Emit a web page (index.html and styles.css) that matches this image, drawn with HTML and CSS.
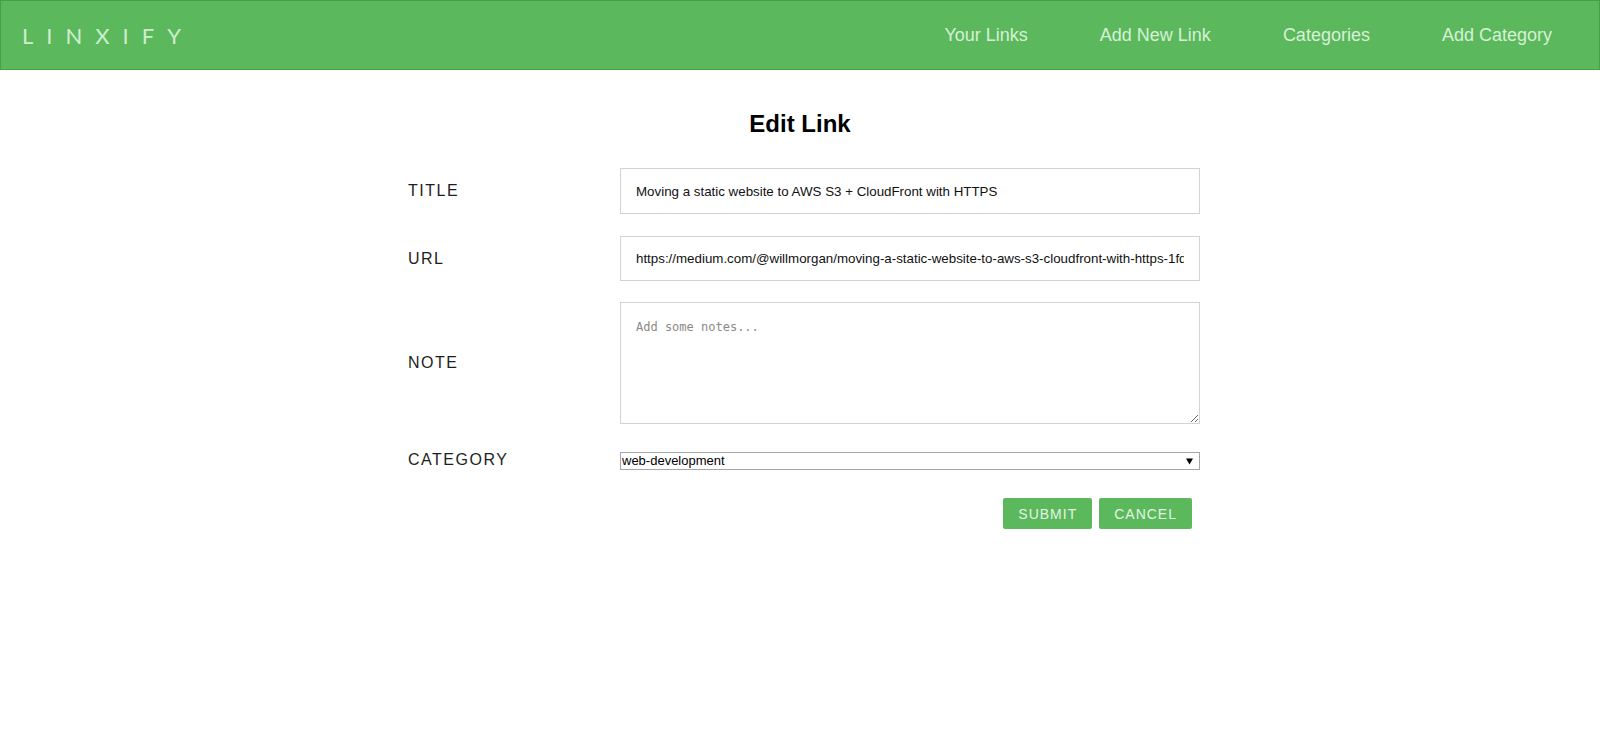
FILE: index.html
```html
<!DOCTYPE html>
<html lang="en">
<head>
<meta charset="utf-8">
<title>Linxify - Edit Link</title>
<link rel="stylesheet" href="styles.css">
</head>
<body>
<header class="navbar">
  <div class="logo">LINXIFY</div>
  <nav class="nav">
    <a class="nav-link" href="#">Your Links</a>
    <a class="nav-link" href="#">Add New Link</a>
    <a class="nav-link" href="#">Categories</a>
    <a class="nav-link" href="#">Add Category</a>
  </nav>
</header>
<main class="main">
  <h1 class="title">Edit Link</h1>
  <form class="form">
    <div class="row row-title">
      <label class="label" for="title">TITLE</label>
      <input class="input" id="title" type="text" value="Moving a static website to AWS S3 + CloudFront with HTTPS">
    </div>
    <div class="row row-url">
      <label class="label" for="url">URL</label>
      <input class="input" id="url" type="text" value="https://medium.com/@willmorgan/moving-a-static-website-to-aws-s3-cloudfront-with-https-1fdd95563106">
    </div>
    <div class="row row-note">
      <label class="label" for="note">NOTE</label>
      <textarea class="textarea" id="note" placeholder="Add some notes..."></textarea>
    </div>
    <div class="row row-cat">
      <label class="label" for="cat">CATEGORY</label>
      <select class="select" id="cat">
        <option>web-development</option>
      </select>
    </div>
    <div class="actions">
      <button class="btn" type="button">Submit</button>
      <button class="btn" type="button">Cancel</button>
    </div>
  </form>
</main>
</body>
</html>
```
FILE: styles.css
```css
* { box-sizing: border-box; }
html, body {
  margin: 0;
  padding: 0;
  background: #fff;
  font-family: "Liberation Sans", Arial, sans-serif;
}
.navbar {
  height: 70px;
  background: #5cb85c;
  border: 1px solid #45a145;
  display: flex;
  align-items: center;
  justify-content: space-between;
  padding: 0 11px 0 21px;
}
.logo {
  font-family: Lato, "Liberation Sans", sans-serif;
  font-weight: 400;
  font-size: 22px;
  letter-spacing: 13px;
  color: #cdeecd;
  padding-top: 1px;
}
.nav {
  display: flex;
  align-items: center;
}
.nav-link {
  color: #d6f1d6;
  text-decoration: none;
  font-size: 18px;
  padding: 0 36px;
}
.main {
  width: 800px;
  margin: 0 auto;
}
.title {
  margin: 40px 0 30px;
  text-align: center;
  font-size: 24px;
  line-height: 28px;
  font-weight: bold;
  color: #000;
}
.form {
  display: flex;
  flex-direction: column;
}
.row {
  display: flex;
  align-items: center;
}
.label {
  width: 220px;
  padding-left: 8px;
  font-size: 16px;
  letter-spacing: 1.5px;
  color: #1e1e1e;
}
.input {
  width: 580px;
  height: 46px;
  border: 1px solid #d3d3d3;
  padding: 0 15px;
  font-family: "Liberation Sans", Arial, sans-serif;
  font-size: 13.33px;
  color: #111;
  background: #fff;
  outline: none;
}
.row-title { margin-bottom: 22px; }
.row-url { margin-bottom: 21px; }
.row-url .input { height: 45px; }
.row-note { margin-bottom: 28px; }
.textarea {
  width: 580px;
  height: 122px;
  border: 1px solid #d3d3d3;
  padding: 17px 15px 15px;
  font-family: "DejaVu Sans Mono", "Liberation Mono", monospace;
  font-size: 12px;
  color: #111;
  resize: vertical;
  outline: none;
}
.textarea::placeholder { color: #8a8a8a; }
.row-cat { margin-bottom: 28px; }
.row-cat .label { margin-top: -2px; }
.select {
  width: 580px;
  height: 18px;
  border: 1px solid #a6a6a6;
  border-radius: 0;
  padding: 0 0 0 1px;
  font-family: "Liberation Sans", Arial, sans-serif;
  font-size: 13px;
  color: #000;
  -webkit-appearance: none;
  appearance: none;
  background: #fff url("data:image/svg+xml;utf8,<svg xmlns='http://www.w3.org/2000/svg' width='7' height='7' viewBox='0 0 7 7'><path d='M0 0.5h7L3.5 6.5z' fill='%23000'/></svg>") no-repeat right 6px center;
  line-height: 16px;
}
.actions {
  display: flex;
  justify-content: flex-end;
  gap: 7px;
  padding-right: 8px;
}
.btn {
  height: 31px;
  padding: 0 15px;
  border: none;
  border-radius: 2px;
  background: #5cb85c;
  color: #e3f5e3;
  font-family: "Liberation Sans", Arial, sans-serif;
  font-size: 14px;
  letter-spacing: 1px;
  text-transform: uppercase;
  cursor: pointer;
}
```
